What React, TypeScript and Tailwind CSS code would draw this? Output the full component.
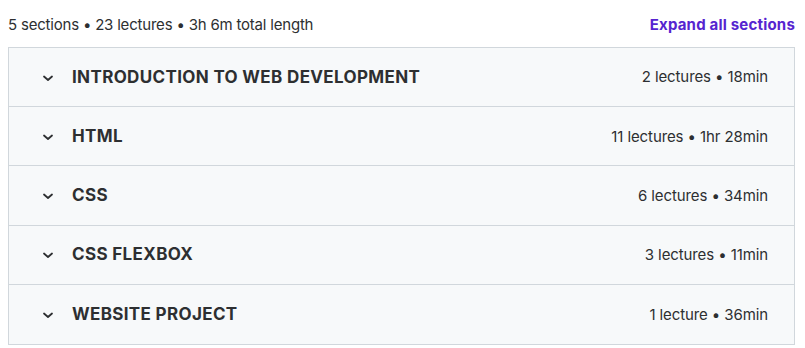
import React from "react";

const sections = [
  { title: "INTRODUCTION TO WEB DEVELOPMENT", meta: "2 lectures • 18min" },
  { title: "HTML", meta: "11 lectures • 1hr 28min" },
  { title: "CSS", meta: "6 lectures • 34min" },
  { title: "CSS FLEXBOX", meta: "3 lectures • 11min" },
  { title: "WEBSITE PROJECT", meta: "1 lecture • 36min" },
];

function Chevron() {
  return (
    <svg width="12" height="12" viewBox="0 0 12 12" fill="none" className="shrink-0">
      <path d="M2 4.5l4 3.5 4-3.5" stroke="#2d2f31" strokeWidth="1.8" strokeLinecap="round" strokeLinejoin="round" />
    </svg>
  );
}

export default function App() {
  return (
    <div className="w-[805px] h-[348px] bg-white font-['Inter',sans-serif] text-[#2d2f31]">
      {/* summary line */}
      <div className="flex items-center justify-between pl-2 pr-[10px] h-[47px] pt-[3px]">
        <span className="text-[15px] tracking-[-0.2px]">5 sections • 23 lectures • 3h 6m total length</span>
        <button className="text-[15px] font-bold text-[#5624d0] tracking-[0.2px]">Expand all sections</button>
      </div>
      {/* accordion */}
      <div className="ml-2 w-[787px] border border-[#d1d7dc]">
        {sections.map((s, i) => (
          <div
            key={s.title}
            className={
              "flex items-center h-[59.2px] bg-[#f7f9fa] pl-[33px] pr-[26px] pt-[1px] " +
              (i < sections.length - 1 ? "border-b border-[#d1d7dc]" : "")
            }
          >
            <Chevron />
            <span className="ml-[18px] text-[17px] font-bold flex-1 tracking-[0.35px]">{s.title}</span>
            <span className="text-[15px] tracking-[-0.1px]">{s.meta}</span>
          </div>
        ))}
      </div>
    </div>
  );
}
